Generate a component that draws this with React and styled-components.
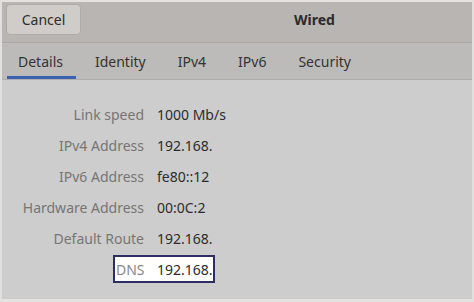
import styled, { createGlobalStyle } from "styled-components";

const GlobalStyle = createGlobalStyle`
  html, body {
    margin: 0;
    padding: 0;
    background: #d8d6d4;
  }
  body {
    font-family: "Noto Sans", "Open Sans", sans-serif;
  }
`;

const tabs = ["Details", "Identity", "IPv4", "IPv6", "Security"];

const rows = [
  { label: "Link speed", value: "1000 Mb/s" },
  { label: "IPv4 Address", value: "192.168." },
  { label: "IPv6 Address", value: "fe80::12" },
  { label: "Hardware Address", value: "00:0C:2" },
  { label: "Default Route", value: "192.168." },
];

const App = () => {
  return (
    <>
      <GlobalStyle />
      <Window>
        <Header>
          <CancelButton>Cancel</CancelButton>
          <Title>Wired</Title>
        </Header>
        <TabBar>
          {tabs.map((t, i) => (
            <Tab key={t} active={i === 0}>
              {t}
            </Tab>
          ))}
        </TabBar>
        <Content>
          {rows.map((r) => (
            <Row key={r.label}>
              <Label>{r.label}</Label>
              <Value>{r.value}</Value>
            </Row>
          ))}
          <Row>
            <Focused>
              <FocusLabel>DNS</FocusLabel>
              <Value>192.168.</Value>
            </Focused>
          </Row>
        </Content>
      </Window>
    </>
  );
};

export default App;

const Window = styled.div`
  width: 474px;
  height: 302px;
  box-sizing: border-box;
  border-left: 2px solid #e2e0de;
  border-right: 2px solid #e2e0de;
  border-bottom: 3px solid #e4e2e0;
  display: flex;
  flex-direction: column;
  overflow: hidden;
  background: #cdcdcd;
`;

const Header = styled.div`
  height: 43px;
  box-sizing: border-box;
  border-top: 2px solid #e6e2de;
  border-bottom: 1px solid #a9a6a3;
  background: #b8b5b2;
  display: flex;
  align-items: center;
  padding-left: 4px;
`;

const CancelButton = styled.button`
  width: 75px;
  height: 31px;
  margin-top: -6px;
  border: 1px solid #aeaba8;
  border-radius: 4px;
  background: #cfccc9;
  color: #2e2d2c;
  font-family: "Noto Sans", sans-serif;
  font-size: 14px;
  padding: 0;
`;

const Title = styled.div`
  margin-left: 213px;
  margin-top: -6px;
  font-weight: bold;
  font-size: 14px;
  color: #2c2b2a;
`;

const TabBar = styled.div`
  height: 37px;
  box-sizing: border-box;
  background: #bdbbb9;
  border-bottom: 1px solid #b0aeac;
  display: flex;
  align-items: stretch;
`;

const Tab = styled.div`
  position: relative;
  padding: 0 16px;
  display: flex;
  align-items: center;
  font-size: 14px;
  color: #333;
  &::after {
    content: "";
    display: ${(p) => (p.active ? "block" : "none")};
    position: absolute;
    left: 5px;
    right: 3px;
    bottom: 0;
    height: 3px;
    background: #3a62b0;
  }
`;

const Content = styled.div`
  flex: 1;
  padding-top: 19px;
  display: flex;
  flex-direction: column;
`;

const Row = styled.div`
  height: 31px;
  display: flex;
  align-items: center;
  font-size: 14px;
`;

const Label = styled.div`
  width: 142px;
  padding-right: 13px;
  text-align: right;
  color: #777574;
`;

const Value = styled.div`
  color: #2c2c2c;
`;

const Focused = styled.div`
  margin-left: 111px;
  width: 102px;
  height: 28px;
  margin-top: -1px;
  box-sizing: border-box;
  border: 2px solid #2b2d63;
  background: #fff;
  display: flex;
  align-items: center;
  padding-left: 1px;
`;

const FocusLabel = styled.div`
  width: 28px;
  padding-right: 13px;
  color: #8a8888;
`;
